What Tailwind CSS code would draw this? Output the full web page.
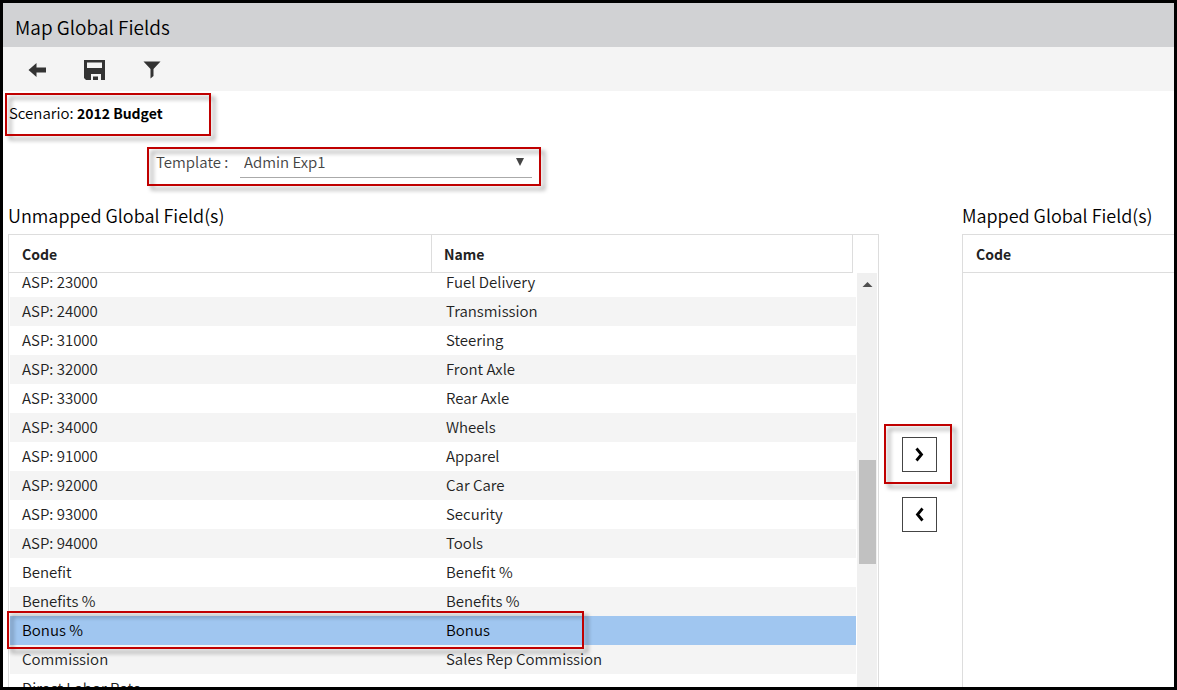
<!DOCTYPE html>
<html lang="en">
<head>
<meta charset="utf-8">
<meta name="viewport" content="width=device-width, initial-scale=1">
<title>Map Global Fields</title>
<script src="https://cdn.jsdelivr.net/npm/@tailwindcss/browser@4"></script>
</head>
<body class="flex h-screen flex-col overflow-hidden border-[3px] border-black bg-white font-['Noto_Sans_CJK_SC',sans-serif] text-[15px] font-[350] text-[#222]">
<header class="flex h-11 shrink-0 items-center bg-[#d1d2d4] px-3 pt-1">
  <h1 class="text-[19px] leading-6 font-[350] text-black">Map Global Fields</h1>
</header>
<nav aria-label="Toolbar" class="flex h-11 shrink-0 items-center gap-[34px] bg-[#f4f4f4] pt-0.5 pl-[22px]">
  <button type="button" aria-label="Back" class="h-6 w-6"><svg viewBox="0 0 24 24" class="h-6 w-6" fill="#333"><path d="M3.500 12 11.500 5V9.500H21v5h-9.500v4.500Z"/></svg></button>
  <button type="button" aria-label="Save" class="h-6 w-6"><svg viewBox="0 0 24 24" class="h-6 w-6" fill="#333" fill-rule="evenodd"><path d="M1 2H22V22H18V16H8V22H3L1 20ZM4 4.500V10H19V4.500ZM10 18.500H15V22H10Z"/></svg></button>
  <button type="button" aria-label="Filter" class="h-6 w-6"><svg viewBox="0 0 24 24" class="h-6 w-6" fill="#333"><path d="M2.500 3.500H19.500L12.500 11V18L9.500 20.500V11Z"/></svg></button>
</nav>
<main class="flex min-h-0 flex-1 flex-col pt-0.5">
  <div class="relative ml-0.5 h-[43px] w-[206px] shrink-0 pt-2.5 pl-1 text-black">
    <p class="leading-5">Scenario: <b class="text-sm font-bold">2012 Budget</b></p>
    <div class="pointer-events-none absolute inset-0 border-2 border-[#c00000] drop-shadow-[4px_4px_2px_rgba(0,0,0,0.4)]"></div>
  </div>
  <div class="relative mt-[11px] ml-36 flex h-[39px] w-[394px] shrink-0 items-start pr-[9px] pl-[9px] text-[#444]">
    <label for="template" class="w-[84px] pt-[5px] leading-5">Template :</label>
    <div class="relative flex-1">
      <select id="template" class="h-[31px] w-full appearance-none border-b border-[#aaa] pl-1 leading-5"><option>Admin Exp1</option></select>
      <svg viewBox="0 0 8 8" class="pointer-events-none absolute top-[11px] right-2 h-2 w-2" fill="#444"><path d="M0 0H8L4 8Z"/></svg>
    </div>
    <div class="pointer-events-none absolute inset-0 border-2 border-[#c00000] drop-shadow-[4px_4px_2px_rgba(0,0,0,0.4)]"></div>
  </div>
  <div class="mt-[17px] flex min-h-0 flex-1 pl-[5px]">
    <section class="flex min-w-0 flex-1 flex-col">
      <h2 class="h-[31px] shrink-0 text-lg leading-6 font-[350] text-black">Unmapped Global Field(s)</h2>
      <div class="flex min-h-0 flex-1 border border-b-0 border-[#ddd]">
        <table class="flex min-w-0 flex-1 flex-col text-left">
          <thead class="mr-1 block shrink-0 border-r border-b border-[#ddd] text-sm">
            <tr class="flex h-[37px] items-center">
              <th scope="col" class="h-full w-[423px] border-r border-[#ddd] pt-[9px] pl-[13px] leading-5">Code</th>
              <th scope="col" class="h-full flex-1 pt-[9px] pl-3 leading-5">Name</th>
            </tr>
          </thead>
          <tbody class="-ml-[3px] flex min-h-0 flex-1 flex-col justify-start overflow-hidden pr-px pl-1 [&>tr]:flex [&>tr]:h-[29px] [&>tr]:shrink-0 [&>tr]:items-center [&>tr:nth-child(even)]:bg-[#f4f4f4] [&>tr:first-child]:-mt-[5px] [&_td]:pb-0.5 [&_td]:leading-5 [&_td:first-child]:w-[424px] [&_td]:pl-3">
            <tr><td>ASP: 23000</td><td>Fuel Delivery</td></tr>
            <tr><td>ASP: 24000</td><td>Transmission</td></tr>
            <tr><td>ASP: 31000</td><td>Steering</td></tr>
            <tr><td>ASP: 32000</td><td>Front Axle</td></tr>
            <tr><td>ASP: 33000</td><td>Rear Axle</td></tr>
            <tr><td>ASP: 34000</td><td>Wheels</td></tr>
            <tr><td>ASP: 91000</td><td>Apparel</td></tr>
            <tr><td>ASP: 92000</td><td>Car Care</td></tr>
            <tr><td>ASP: 93000</td><td>Security</td></tr>
            <tr><td>ASP: 94000</td><td>Tools</td></tr>
            <tr><td>Benefit</td><td>Benefit %</td></tr>
            <tr><td>Benefits %</td><td>Benefits %</td></tr>
            <tr aria-selected="true" class="relative bg-[#a0c6f0] text-black"><td>Bonus %</td><td>Bonus</td><td aria-hidden="true" class="pointer-events-none absolute -top-[5px] -left-[3px] h-[38px] w-[577px] border-2 border-[#c00000] drop-shadow-[4px_4px_2px_rgba(0,0,0,0.4)]"></td></tr>
            <tr><td>Commission</td><td>Sales Rep Commission</td></tr>
            <tr><td>Direct Labor Rate</td><td></td></tr>
          </tbody>
        </table>
        <div class="mt-[38px] flex w-[21px] flex-col border-r border-white bg-[#f0f0f0] px-px">
          <svg viewBox="0 0 18 24" class="h-6 w-[18px]" fill="#505050"><path d="M4.500 14 9.500 9 14.500 14Z"/></svg>
          <div class="mt-[163px] ml-px h-[104px] bg-[#c1c1c1]"></div>
        </div>
      </div>
    </section>
    <div class="flex w-[83px] shrink-0 flex-col items-center gap-[25px] pt-[234px] pr-0.5">
      <div class="relative">
        <button type="button" aria-label="Map field" class="flex h-[35px] w-[35px] items-center justify-center border border-[#444] bg-white"><svg viewBox="0 0 16 16" class="h-4 w-4" fill="none" stroke="#000" stroke-width="2.800"><path d="M4.500 1.500 9.500 7.500 4.500 13.500"/></svg></button>
        <div class="pointer-events-none absolute -top-[13px] -left-[18px] h-[60px] w-[68px] border-2 border-[#c00000] drop-shadow-[4px_4px_2px_rgba(0,0,0,0.4)]"></div>
      </div>
      <button type="button" aria-label="Unmap field" class="flex h-[35px] w-[35px] items-center justify-center border border-[#444] bg-white"><svg viewBox="0 0 16 16" class="h-4 w-4" fill="none" stroke="#000" stroke-width="2.800"><path d="M10.500 1.500 5.500 7.500 10.500 13.500"/></svg></button>
    </div>
    <section class="flex w-[212px] shrink-0 flex-col">
      <h2 class="h-[31px] shrink-0 text-lg leading-6 font-[350] text-black">Mapped Global Field(s)</h2>
      <div class="flex-1 border-t border-l border-[#ddd]">
        <table class="w-full text-left text-sm">
          <thead class="block border-b border-[#ddd]"><tr class="block h-[37px]"><th scope="col" class="block pt-[9px] pl-[13px] leading-5">Code</th></tr></thead>
        </table>
      </div>
    </section>
  </div>
</main>
</body>
</html>
